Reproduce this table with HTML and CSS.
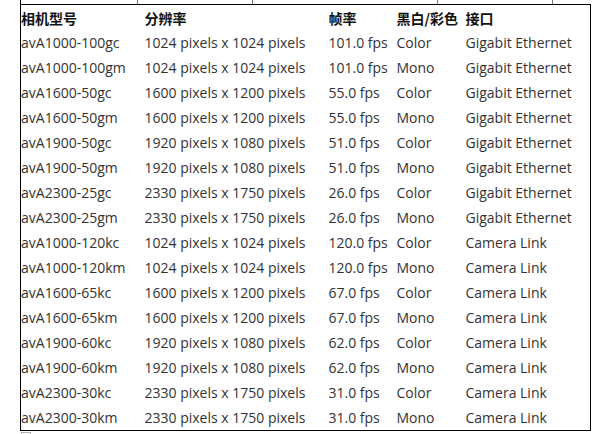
FILE: index.html
```html
<!DOCTYPE html>
<html lang="zh">
<head>
<meta charset="utf-8">
<link rel="stylesheet" href="styles.css">
</head>
<body>
<div class="wrap">
  <div class="prev">
    <span class="pc c1"></span><span class="pc c2"></span><span class="pc c3"></span><span class="pc c4"></span><span class="pc c5"></span>
  </div>
  <table class="spec">
    <colgroup>
      <col class="w1"><col class="w2"><col class="w3"><col class="w4"><col class="w5">
    </colgroup>
    <thead>
      <tr><th>相机型号</th><th>分辨率</th><th>帧率</th><th>黑白/彩色</th><th>接口</th></tr>
    </thead>
    <tbody>
      <tr><td>avA1000-100gc</td><td>1024 pixels x 1024 pixels</td><td>101.0 fps</td><td>Color</td><td>Gigabit Ethernet</td></tr>
      <tr><td>avA1000-100gm</td><td>1024 pixels x 1024 pixels</td><td>101.0 fps</td><td>Mono</td><td>Gigabit Ethernet</td></tr>
      <tr><td>avA1600-50gc</td><td>1600 pixels x 1200 pixels</td><td>55.0 fps</td><td>Color</td><td>Gigabit Ethernet</td></tr>
      <tr><td>avA1600-50gm</td><td>1600 pixels x 1200 pixels</td><td>55.0 fps</td><td>Mono</td><td>Gigabit Ethernet</td></tr>
      <tr><td>avA1900-50gc</td><td>1920 pixels x 1080 pixels</td><td>51.0 fps</td><td>Color</td><td>Gigabit Ethernet</td></tr>
      <tr><td>avA1900-50gm</td><td>1920 pixels x 1080 pixels</td><td>51.0 fps</td><td>Mono</td><td>Gigabit Ethernet</td></tr>
      <tr><td>avA2300-25gc</td><td>2330 pixels x 1750 pixels</td><td>26.0 fps</td><td>Color</td><td>Gigabit Ethernet</td></tr>
      <tr><td>avA2300-25gm</td><td>2330 pixels x 1750 pixels</td><td>26.0 fps</td><td>Mono</td><td>Gigabit Ethernet</td></tr>
      <tr><td>avA1000-120kc</td><td>1024 pixels x 1024 pixels</td><td>120.0 fps</td><td>Color</td><td>Camera Link</td></tr>
      <tr><td>avA1000-120km</td><td>1024 pixels x 1024 pixels</td><td>120.0 fps</td><td>Mono</td><td>Camera Link</td></tr>
      <tr><td>avA1600-65kc</td><td>1600 pixels x 1200 pixels</td><td>67.0 fps</td><td>Color</td><td>Camera Link</td></tr>
      <tr><td>avA1600-65km</td><td>1600 pixels x 1200 pixels</td><td>67.0 fps</td><td>Mono</td><td>Camera Link</td></tr>
      <tr><td>avA1900-60kc</td><td>1920 pixels x 1080 pixels</td><td>62.0 fps</td><td>Color</td><td>Camera Link</td></tr>
      <tr><td>avA1900-60km</td><td>1920 pixels x 1080 pixels</td><td>62.0 fps</td><td>Mono</td><td>Camera Link</td></tr>
      <tr><td>avA2300-30kc</td><td>2330 pixels x 1750 pixels</td><td>31.0 fps</td><td>Color</td><td>Camera Link</td></tr>
      <tr><td>avA2300-30km</td><td>2330 pixels x 1750 pixels</td><td>31.0 fps</td><td>Mono</td><td>Camera Link</td></tr>
    </tbody>
  </table>
  <div class="handle"></div>
</div>
</body>
</html>
```

FILE: styles.css
```css
html, body {
  margin: 0;
  padding: 0;
  background: #ffffff;
}

.wrap {
  margin-left: 20px;
  width: 570px;
  font-family: "Open Sans", "Noto Sans CJK SC", sans-serif;
  font-size: 14px;
  color: #333333;
}

.prev {
  display: flex;
  height: 4px;
  border-left: 1px solid #000;
}

.pc {
  display: block;
  height: 4px;
  border-right: 1px solid #777;
  box-sizing: border-box;
}

.pc.c1 { width: 117px; }
.pc.c2 { width: 115px; }
.pc.c3 { width: 185px; }
.pc.c4 { width: 115px; }
.pc.c5 { flex: 1; border-right: none; }

.spec {
  border-collapse: collapse;
  table-layout: fixed;
  width: 570px;
  border: 1px solid #000;
}

.w1 { width: 124px; }
.w2 { width: 184px; }
.w3 { width: 68px; }
.w4 { width: 69px; }
.w5 { width: 125px; }

.spec th,
.spec td {
  padding: 1px 0 0 0;
  height: 24px;
  text-align: left;
  white-space: nowrap;
  vertical-align: middle;
  line-height: 24px;
}

.spec th {
  font-family: "Noto Sans CJK SC", sans-serif;
  font-weight: bold;
  color: #111;
  font-size: 14px;
}

.handle {
  margin-top: 1px;
  width: 10px;
  height: 10px;
  box-sizing: border-box;
  border: 1px solid #b0b0b0;
  margin-left: 1px;
}
```
